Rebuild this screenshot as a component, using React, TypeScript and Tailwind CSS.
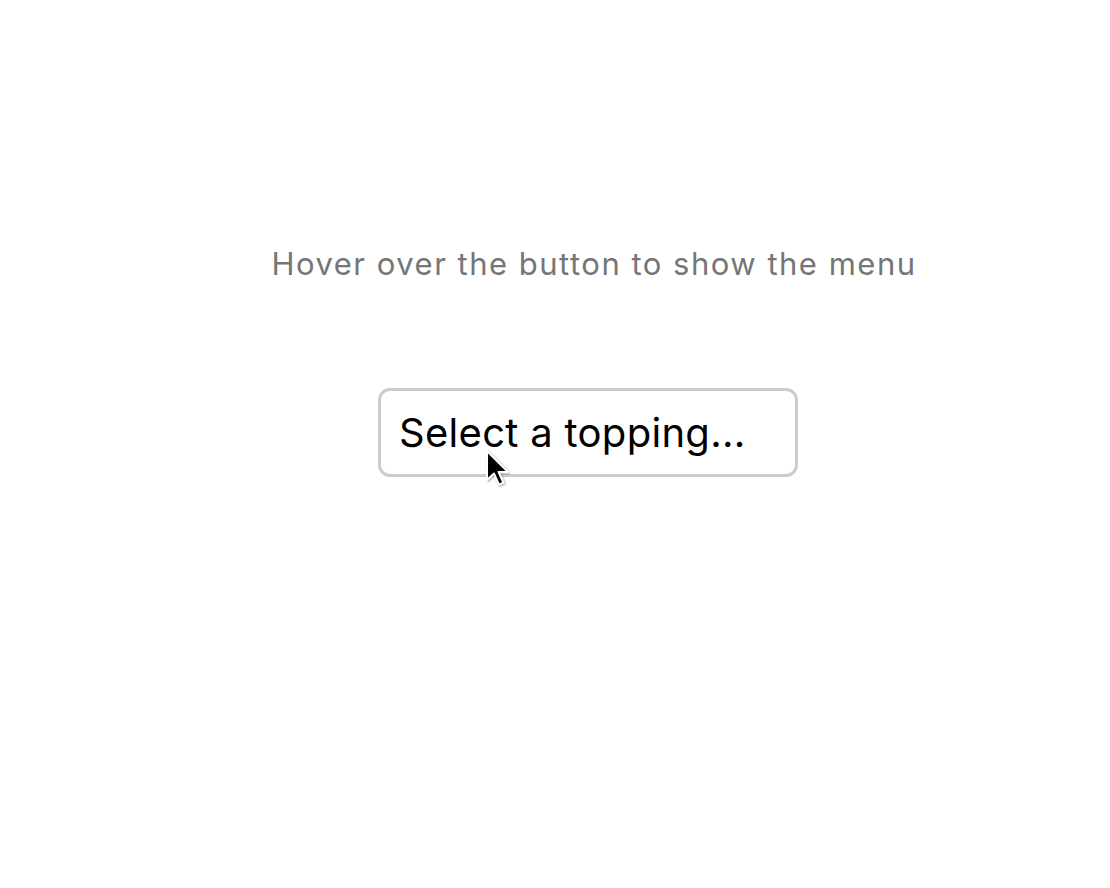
import { useState } from 'react';

function Cursor() {
  return (
    <svg width="26" height="38" viewBox="0 0 13 19" className="absolute left-[107px] top-[61px] pointer-events-none drop-shadow-[1px_1px_1px_rgba(0,0,0,0.35)]">
      <path d="M1 1 L1 15.5 L4.5 12.3 L7 17.8 L9.2 16.8 L6.8 11.5 L11.5 11.5 Z" fill="black" stroke="white" strokeWidth="1" strokeLinejoin="round" />
    </svg>
  );
}

export default function App() {
  const [open, setOpen] = useState(false);

  return (
    <div className="min-h-[888px] bg-white font-['Inter',sans-serif] flex flex-col items-center pt-[244px] pl-[78px]">
      <p className="text-[31px] leading-[40px] tracking-[1.5px] text-[#767676]">Hover over the button to show the menu</p>
      <div className="relative mt-[104px] ml-[-12px]">
        <button
          onMouseEnter={() => setOpen(true)}
          onMouseLeave={() => setOpen(false)}
          className="w-[420px] h-[89px] border-[3px] border-[#cccccc] rounded-[12px] text-left pl-[18px] text-[40px] tracking-[0.3px] text-black bg-white"
        >
          Select a topping...
        </button>
        {open && null}
        <Cursor />
      </div>
    </div>
  );
}
